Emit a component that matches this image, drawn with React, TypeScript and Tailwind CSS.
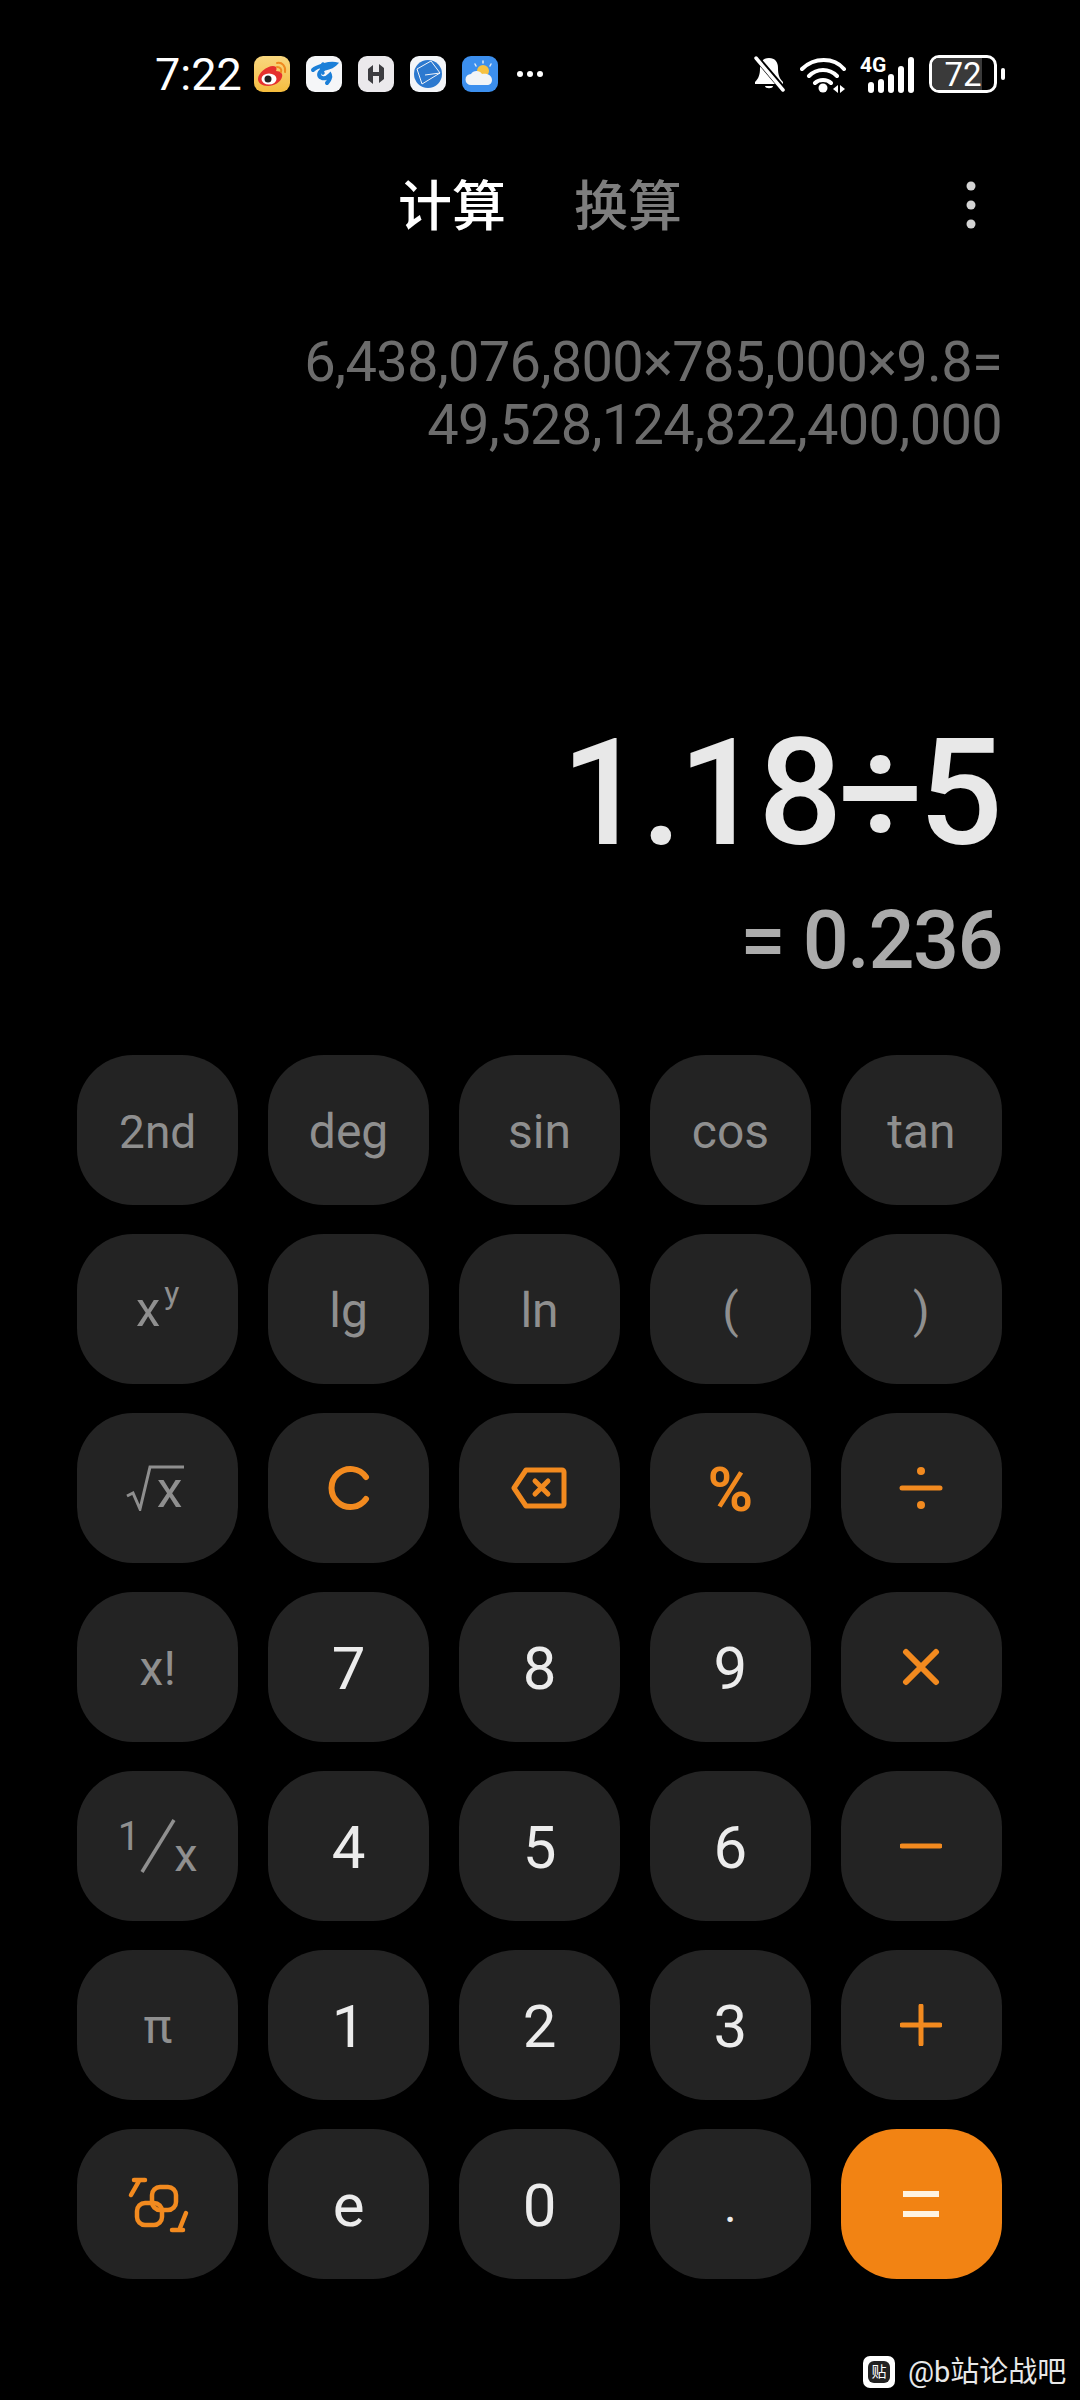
import type { ReactNode } from 'react';

const FONT = "font-['Roboto','Noto_Sans_CJK_SC',sans-serif]";
const ORANGE = '#f28a1f';
const GRAY = '#8f8f8f';

const Svg = ({ w, h, children }: { w: number; h: number; children: ReactNode }) => (
    <svg width={w} height={h} viewBox={`0 0 ${w} ${h}`} fill="none">{children}</svg>
);

const AppIcon = ({ bg, children }: { bg: string; children: ReactNode }) => (
    <div className={`w-9 h-9 rounded-[9px] flex items-center justify-center overflow-hidden ${bg}`}>
        <Svg w={36} h={36}>{children}</Svg>
    </div>
);

const StatusBar = () => (
    <div className="h-[94px] pt-[54px] pl-[155px] flex items-center">
        <span className={`${FONT} text-[45px] leading-none text-white w-[99px]`}>7:22</span>
        <div className="flex gap-[16px]">
            <div className="w-9 h-9 rounded-[9px] bg-gradient-to-b from-[#f9d77e] to-[#f5bc3c] overflow-hidden">
                <Svg w={36} h={36}>
                    <path d="M4 23c0-6 9-13 15-13 4 0 4 3 3 5 5 0 7 3 6 6-1 5-8 9-14 9-6 0-10-3-10-7z" fill="#e6312e" />
                    <ellipse cx="15" cy="23" rx="7.5" ry="5.5" fill="#fff" />
                    <circle cx="14" cy="23" r="3.5" fill="#222" />
                    <path d="M23 7c5-1 9 3 8 9M23 11c3 0 5 2 4 5" stroke="#f08a20" strokeWidth="2" strokeLinecap="round" />
                </Svg>
            </div>
            <AppIcon bg="bg-[#f5f6f8]">
                <path d="M7 14c4-4 17-7 22-6-3 3-8 4-11 5-5 2-7 7-2 9 3 1 6-1 8-3 1 2-1 6-3 8" stroke="#1b7fd8" strokeWidth="4" strokeLinecap="round" />
                <path d="M17 8c-2 3-2 6 0 9" stroke="#1b7fd8" strokeWidth="3.5" strokeLinecap="round" />
            </AppIcon>
            <AppIcon bg="bg-[#ebe9ec]">
                <path d="M15 9l-5 4v11l5 4V20h3v-4h-3zM21 27l5-4V12l-5-4v8h-3v4h3z" fill="#3c3c40" />
            </AppIcon>
            <AppIcon bg="bg-[#f3f5f8]">
                <circle cx="18" cy="18" r="14" fill="#2c79cf" />
                <path d="M7 13l14-8M7 13l5 15M21 5l9 12M30 17l-18 11M15 19l15-2" stroke="#f3f5f8" strokeWidth="1" />
            </AppIcon>
            <AppIcon bg="bg-[#3c8fee]">
                <circle cx="21" cy="15" r="6" fill="#f7c242" />
                <path d="M21 5v2M13 8l1 2M29 8l-1 2" stroke="#dfe9f5" strokeWidth="1.5" strokeLinecap="round" />
                <path d="M9 29a5 5 0 010-11c2-4 9-4 11 0 6-1 10 2 10 6 0 3-2 5-5 5z" fill="#f2f4f7" />
            </AppIcon>
        </div>
        <div className="flex gap-[4px] ml-[19px]">
            <span className="w-[6px] h-[6px] rounded-full bg-white" />
            <span className="w-[6px] h-[6px] rounded-full bg-white" />
            <span className="w-[6px] h-[6px] rounded-full bg-white" />
        </div>
        <div className="ml-[210px] flex items-center">
            <Svg w={32} h={38}>
                <path d="M16 3c-6 0-9 4-9 10 0 6-1 10-5 14v2h28v-2c-4-4-5-8-5-14 0-6-3-10-9-10z" fill="#fff" />
                <path d="M12 31c0 3 8 3 8 0z" fill="#fff" />
                <path d="M3 2l28 33" stroke="#000" strokeWidth="6" />
                <path d="M3 3l27 32" stroke="#fff" strokeWidth="3.5" strokeLinecap="round" />
            </Svg>
            <div className="ml-[15px]">
                <Svg w={46} h={38}>
                    <path d="M2 14c12-12 32-12 42 0M9 21c8-8 20-8 28 0M15 28c4-4 12-4 16 0" stroke="#fff" strokeWidth="4" strokeLinecap="round" />
                    <circle cx="23" cy="33" r="4.5" fill="#fff" />
                    <path d="M38 30l-5 4 5 4zM40 30l5 4-5 4z" fill="#fff" />
                </Svg>
            </div>
            <div className="relative ml-[14px] w-[53px] h-[38px]">
                <span className={`${FONT} absolute left-0 top-0 text-[21px] leading-none font-bold text-white`}>4G</span>
                <div className="absolute left-[8px] bottom-0 flex items-end gap-[4px]">
                    <span className="w-[6px] h-[11px] rounded-full bg-white" />
                    <span className="w-[6px] h-[14px] rounded-full bg-white" />
                    <span className="w-[6px] h-[19px] rounded-full bg-white" />
                    <span className="w-[6px] h-[27px] rounded-full bg-white" />
                    <span className="w-[6px] h-[36px] rounded-full bg-white" />
                </div>
            </div>
            <div className="ml-[16px] relative w-[68px] h-[38px] rounded-[10px] border-[3px] border-white overflow-hidden">
                <div className="w-[50px] h-full bg-[#3a3a3a]" />
                <span className={`${FONT} absolute inset-0 flex items-center justify-center text-[33px] leading-none text-white`}>72</span>
            </div>
            <span className="ml-[4px] w-[4px] h-[12px] rounded-full bg-white" />
        </div>
    </div>
);

const Tabs = () => (
    <div className={`${FONT} h-[86px] mt-[68px] pl-[398px] flex items-center text-[54px] leading-none font-medium`}>
        <span className="mt-[6px] text-white">计算</span>
        <span className="mt-[6px] ml-[68px] text-[#7e7e7e]">换算</span>
        <div className="ml-[284px]">
            <Svg w={10} h={48}>
                <circle cx="5" cy="5" r="4.5" fill="#d4d4d4" />
                <circle cx="5" cy="24" r="4.5" fill="#d4d4d4" />
                <circle cx="5" cy="43" r="4.5" fill="#d4d4d4" />
            </Svg>
        </div>
    </div>
);

const Display = () => (
    <div className={`${FONT} flex flex-col items-end`}>
        <div className="mt-[83px] mr-[78px] text-[56px] leading-[63px] tracking-[-0.7px] text-[#6c6c6c]">6,438,076,800×785,000×9.8=</div>
        <div className="mr-[78px] text-[56px] leading-[63px] tracking-[-0.7px] text-[#6c6c6c]">49,528,124,822,400,000</div>
        <div className="mt-[282px] mr-[81px] text-[148px] leading-[110px] font-medium tracking-[-4px] text-[#e8e8e8]">1.18÷5</div>
        <div className="mt-[52px] mr-[78px] text-[81px] leading-[80px] font-medium tracking-[-1.5px] text-[#ababab]">= 0.236</div>
    </div>
);

const Key = ({ children, tone = 'white', size = 'text-[60px]' }: { children?: ReactNode; tone?: 'white' | 'gray' | 'orange'; size?: string }) => {
    const color = tone === 'white' ? 'text-[#ececec]' : tone === 'gray' ? 'text-[#8f8f8f]' : 'text-[#f28a1f]';
    // plain labels sit a little lower than the drawn icons
    const nudge = typeof children === 'string' ? 'pt-[4px]' : '';
    return (
        <div className={`${FONT} ${color} ${size} ${nudge} leading-none h-[150px] rounded-[56px] bg-[#232323] flex items-center justify-center`}>
            {children}
        </div>
    );
};

const Keypad = () => (
    <div className="mt-[74px] ml-[77px] mr-[78px] grid grid-cols-5 gap-x-[29.5px] gap-y-[29px]">
        <Key tone="gray" size="text-[46px]">2nd</Key>
        <Key tone="gray" size="text-[48px]">deg</Key>
        <Key tone="gray" size="text-[48px]">sin</Key>
        <Key tone="gray" size="text-[48px]">cos</Key>
        <Key tone="gray" size="text-[48px]">tan</Key>

        <Key tone="gray" size="text-[49px]">
            <span className="flex items-start">x<span className="text-[32px] ml-[4px] -mt-[8px]">y</span></span>
        </Key>
        <Key tone="gray" size="text-[48px]">lg</Key>
        <Key tone="gray" size="text-[48px]">ln</Key>
        <Key tone="gray" size="text-[48px]">(</Key>
        <Key tone="gray" size="text-[48px]">)</Key>

        <Key tone="gray" size="text-[52px]">
            <div className="flex items-end mr-[8px]">
                <Svg w={60} h={46}>
                    <path d="M2 31l6-3 7 16L25 2h34" stroke={GRAY} strokeWidth="3" />
                </Svg>
                <span className="-ml-[28px] leading-[42px]">x</span>
            </div>
        </Key>
        <Key tone="orange">
            <Svg w={44} h={46}>
                <path d="M39 12a19 19 0 100 22" stroke={ORANGE} strokeWidth="6" strokeLinecap="round" />
            </Svg>
        </Key>
        <Key tone="orange">
            <Svg w={56} h={42}>
                <path d="M15 3h36a2 2 0 012 2v32a2 2 0 01-2 2H15L3 21z" stroke={ORANGE} strokeWidth="5" strokeLinejoin="round" />
                <path d="M24 14l13 13M37 14L24 27" stroke={ORANGE} strokeWidth="5" strokeLinecap="round" />
            </Svg>
        </Key>
        <Key tone="orange" size="text-[62px] font-semibold">%</Key>
        <Key tone="orange">
            <Svg w={44} h={46}>
                <path d="M3 23h38" stroke={ORANGE} strokeWidth="5" strokeLinecap="round" />
                <circle cx="22" cy="6" r="4" fill={ORANGE} />
                <circle cx="22" cy="40" r="4" fill={ORANGE} />
            </Svg>
        </Key>

        <Key tone="gray" size="text-[48px]">x!</Key>
        <Key>7</Key>
        <Key>8</Key>
        <Key>9</Key>
        <Key tone="orange">
            <Svg w={38} h={38}>
                <path d="M4 4l30 30M34 4L4 34" stroke={ORANGE} strokeWidth="6" strokeLinecap="round" />
            </Svg>
        </Key>

        <Key tone="gray" size="text-[47px]">
            <div className="flex h-[54px]">
                <span className="text-[40px] leading-[40px] -mt-[2px]">1</span>
                <Svg w={36} h={54}>
                    <path d="M2 53L34 1" stroke={GRAY} strokeWidth="3.5" />
                </Svg>
                <span className="self-end leading-[40px] -ml-[2px] -mb-[2px]">x</span>
            </div>
        </Key>
        <Key>4</Key>
        <Key>5</Key>
        <Key>6</Key>
        <Key tone="orange">
            <Svg w={42} h={6}>
                <path d="M2 3h38" stroke={ORANGE} strokeWidth="5" strokeLinecap="round" />
            </Svg>
        </Key>

        <Key tone="gray" size="text-[48px]">π</Key>
        <Key>1</Key>
        <Key>2</Key>
        <Key>3</Key>
        <Key tone="orange">
            <Svg w={42} h={42}>
                <path d="M2 21h38M21 2v38" stroke={ORANGE} strokeWidth="5" strokeLinecap="round" />
            </Svg>
        </Key>

        <Key tone="orange">
            <Svg w={64} h={58}>
                <path d="M5 20l8-14M8 5h11" stroke={ORANGE} strokeWidth="4.5" strokeLinecap="round" />
                <rect x="26" y="12" width="24" height="23" rx="8" stroke={ORANGE} strokeWidth="4.5" />
                <rect x="11" y="28" width="25" height="22" rx="8" stroke={ORANGE} strokeWidth="4.5" />
                <path d="M60 38l-6 15M46 55h11" stroke={ORANGE} strokeWidth="4.5" strokeLinecap="round" />
            </Svg>
        </Key>
        <Key>e</Key>
        <Key>0</Key>
        <Key size="text-[48px]">.</Key>
        <div className="h-[150px] rounded-[56px] bg-[#f28313] flex flex-col items-center justify-center gap-[14px]">
            <span className="w-[36px] h-[6px] bg-[#fff3e0]" />
            <span className="w-[36px] h-[6px] bg-[#fff3e0]" />
        </div>
    </div>
);

const Watermark = () => (
    <div className="absolute left-[863px] top-[2356px] flex items-center">
        <div className="w-8 h-8 rounded-[7px] bg-white flex items-center justify-center">
            <div className="w-[22px] h-[22px] rounded-[6px] bg-[#222] flex items-center justify-center">
                <span className={`${FONT} text-[15px] leading-none text-white`}>贴</span>
            </div>
        </div>
        <span className={`${FONT} ml-[13px] text-[29px] leading-none text-[#e8e8e8] whitespace-nowrap`}>@b站论战吧</span>
    </div>
);

export default function App() {
    return (
        <div className="relative w-[1080px] h-[2400px] bg-black overflow-hidden">
            <StatusBar />
            <Tabs />
            <Display />
            <Keypad />
            <Watermark />
        </div>
    );
}
